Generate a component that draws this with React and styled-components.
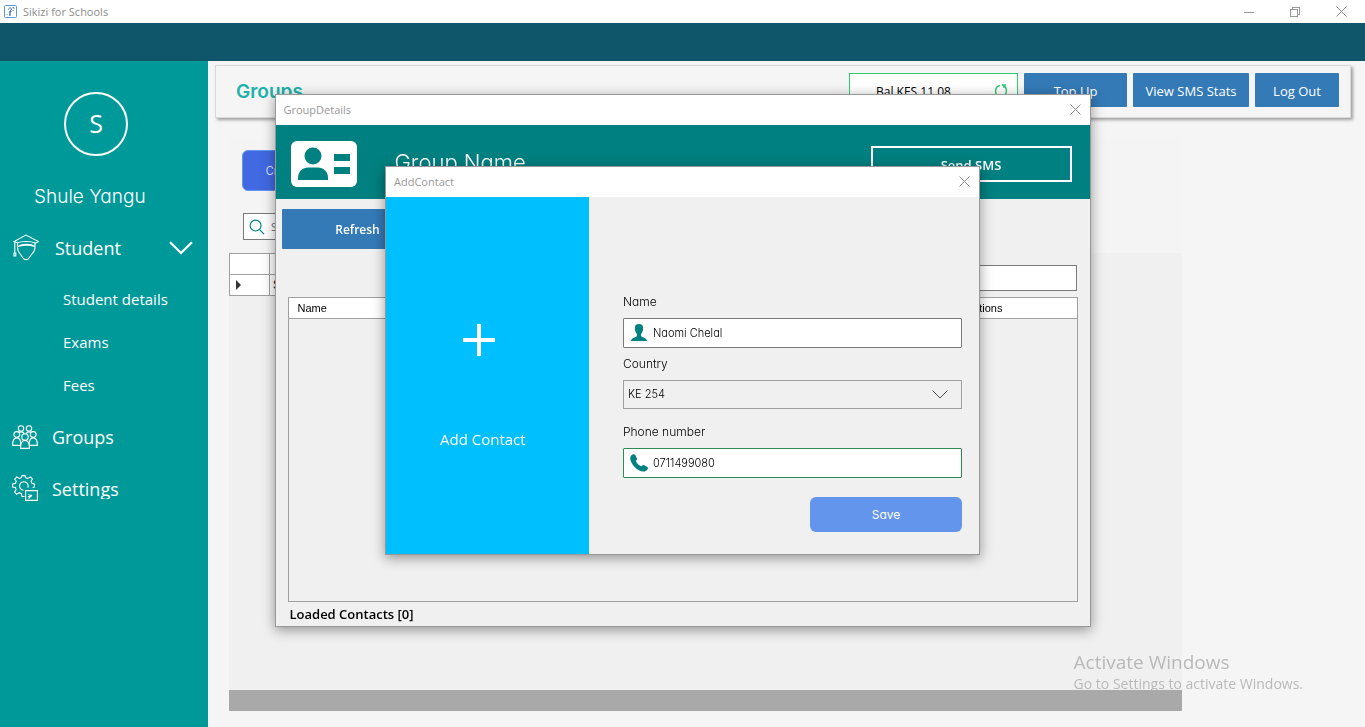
import React from 'react';
import styled, {createGlobalStyle} from 'styled-components';

const FONTS = {
  ui: "'Open Sans', 'Noto Sans', sans-serif",
  round: "Inter, Lato, sans-serif",
  plain: "'Liberation Sans', Arial, sans-serif",
};

const COLORS = {
  sidebar: '#009999',
  strip: '#0f566b',
  page: '#f5f5f5',
  face: '#f0f0f0',
  teal: '#008080',
  blue: '#337ab7',
  cyan: '#00bfff',
  muted: '#999999',
};

const App = () => {
  const [country, setCountry] = React.useState('KE 254');
  const [name, setName] = React.useState('Naomi Chelal');
  const [phone, setPhone] = React.useState('0711499080');

  return (
    <Shell>
      <GlobalStyle/>
      <WindowBar>
        <AppIcon/>
        <WindowTitle>Sikizi for Schools</WindowTitle>
        <CaptionButton aria-label='Minimize'>
          <svg width='10' height='10' shapeRendering='crispEdges'>
            <path d='M0 5.500h10' stroke='#999'/>
          </svg>
        </CaptionButton>
        <CaptionButton aria-label='Restore'>
          <svg width='10' height='10' fill='none' stroke='#999' shapeRendering='crispEdges'>
            <path d='M.5 2.500h7v7h-7zM2.500 2V.5h7v7H8'/>
          </svg>
        </CaptionButton>
        <CaptionButton aria-label='Close'><CloseIcon/></CaptionButton>
      </WindowBar>
      <Strip/>
      <Body>
        <Sidebar>
          <Avatar>S</Avatar>
          <School>Shule Yangu</School>
          <NavLink href='#student' $inset={13} $gap={16}>
            <StudentIcon/>
            <NavText>Student</NavText>
            <NavChevron width='24' height='14' viewBox='0 0 24 14' fill='none' stroke='#fff' strokeWidth='2.300'>
              <path d='M1 1.200 12 12 23 1.200'/>
            </NavChevron>
          </NavLink>
          <SubNav>
            <SubLink href='#details'>Student details</SubLink>
            <SubLink href='#exams'>Exams</SubLink>
            <SubLink href='#fees'>Fees</SubLink>
          </SubNav>
          <NavLink href='#groups' $inset={12} $gap={14}>
            <GroupIcon/>
            <NavText>Groups</NavText>
          </NavLink>
          <NavLink href='#settings' $inset={12} $gap={14}>
            <SettingsIcon/>
            <ClippedNavText>Settings</ClippedNavText>
          </NavLink>
        </Sidebar>
        <Main>
          <PageHeader>
            <PageTitle>Groups</PageTitle>
            <Balance>
              <span>Bal KES 11.08</span>
              <RefreshIcon/>
            </Balance>
            <HeaderButton $width={103}>Top Up</HeaderButton>
            <HeaderButton $width={116}>View SMS Stats</HeaderButton>
            <HeaderButton $width={84}>Log Out</HeaderButton>
          </PageHeader>
          <Tools>
            <CreateButton>Create Group</CreateButton>
            <SearchBox>
              <svg width='16' height='16' viewBox='0 0 17 17' fill='none' stroke={COLORS.teal} strokeWidth='1.200'>
                <circle cx='7' cy='7' r='5.800'/>
                <path d='M11 11l5 5'/>
              </svg>
              <input type='search' aria-label='Search groups' placeholder='Search'/>
            </SearchBox>
          </Tools>
          <GridPanel>
            <GroupTable>
              <thead>
                <tr><th/><th>Group Name</th></tr>
              </thead>
              <tbody>
                <tr>
                  <td>
                    <svg width='6' height='10'><path d='M0 0l5 5-5 5z' fill='#333'/></svg>
                  </td>
                  <td>Staff</td>
                </tr>
              </tbody>
            </GroupTable>
            <GridFooter/>
          </GridPanel>
        </Main>
      </Body>

      <Watermark>
        <h2>Activate Windows</h2>
        <p>Go to Settings to activate Windows.</p>
      </Watermark>

      <Layer>
        <GroupWindow role='dialog' aria-label='GroupDetails'>
          <DialogBar>
            <DialogTitle>GroupDetails</DialogTitle>
            <DialogClose aria-label='Close GroupDetails'><CloseIcon/></DialogClose>
          </DialogBar>
          <Banner>
            <CardIcon/>
            <GroupName>Group Name</GroupName>
            <SendButton>Send SMS</SendButton>
          </Banner>
          <GroupBody>
            <RefreshButton>Refresh</RefreshButton>
            <Filter type='text' aria-label='Filter contacts'/>
            <ContactList>
              <ContactTable>
                <thead>
                  <tr><th>Name</th><th>Options</th></tr>
                </thead>
              </ContactTable>
            </ContactList>
            <Loaded>Loaded Contacts [0]</Loaded>
          </GroupBody>
        </GroupWindow>
      </Layer>

      <Layer>
        <ContactWindow role='dialog' aria-label='AddContact'>
          <DialogBar>
            <DialogTitle>AddContact</DialogTitle>
            <DialogClose aria-label='Close AddContact'><CloseIcon/></DialogClose>
          </DialogBar>
          <ContactBody>
            <AddPane>
              <PlusIcon width='32' height='32' stroke='#fff' strokeWidth='4'>
                <path d='M0 16h32M16 0v32'/>
              </PlusIcon>
              <AddText>Add Contact</AddText>
            </AddPane>
            <Form onSubmit={(ev) => ev.preventDefault()}>
              <Label htmlFor='name'>Name</Label>
              <TextBox $border='#7a7a7a'>
                <PersonIcon/>
                <input id='name' value={name} onChange={(ev) => setName(ev.target.value)}/>
              </TextBox>
              <Label htmlFor='country'>Country</Label>
              <SelectBox>
                <select id='country' value={country} onChange={(ev) => setCountry(ev.target.value)}>
                  <option>KE 254</option>
                  <option>UG 256</option>
                  <option>TZ 255</option>
                </select>
                <svg width='16' height='9' viewBox='0 0 16 9' fill='none' stroke='#555'>
                  <path d='M.5.5 8 8 15.500.5'/>
                </svg>
              </SelectBox>
              <Label htmlFor='phone'>Phone number</Label>
              <TextBox $border='#2e8b57'>
                <PhoneIcon/>
                <input id='phone' type='tel' value={phone} onChange={(ev) => setPhone(ev.target.value)}/>
              </TextBox>
              <SaveButton type='submit'>Save</SaveButton>
            </Form>
          </ContactBody>
        </ContactWindow>
      </Layer>
    </Shell>
  );
};

const AppIcon = () => (
  <svg width='13' height='13' viewBox='0 0 13 13' fill='none' stroke='#5b9bd5'>
    <rect x='.5' y='.5' width='12' height='12' rx='1'/>
    <path d='M7.500 6c-1.500.5-2 1.500-1.500 5' stroke='#2e75b6' strokeWidth='1.300'/>
    <path d='M4.500 4.500c0-2 3-2 3-.5S5 6 5.500 7.500' stroke='#2e75b6'/>
    <path d='M8.500 2.500h1.500v1.500M2.500 9.500h1M8.500 6l1-1'/>
  </svg>
);

const CloseIcon = () => (
  <svg width='11' height='11' viewBox='0 0 11 11' stroke='#8c8c8c'>
    <path d='M.5.5l10 10M10.500.5l-10 10'/>
  </svg>
);

const StudentIcon = () => (
  <svg width='26' height='27' viewBox='0 0 26 27' fill='none' stroke='#fff' strokeWidth='1.100'>
    <path d='M4.500 8.800 1 7.500 13 1l12.500 6.500-3.500 2'/>
    <path d='M4.500 12.500V9C8 7 18 7 22 9v3.500'/>
    <path d='M5 12.500c4-3 13-3 17 0-5-1.500-12-1.500-17 0z'/>
    <path d='M4.500 12.500c-.3 3.500.7 5.500 3 8l2.500 3.500c1.500 2.300 4.500 2.300 6 0l2.500-3.500c2.300-2.500 3.800-5 3.500-8'/>
    <path d='M1.800 8V19M1 19h1.800v3H1z'/>
  </svg>
);

const GroupIcon = () => (
  <svg width='26' height='24' viewBox='0 0 26 24' fill={COLORS.sidebar} stroke='#fff' strokeWidth='1.100'>
    <circle cx='9' cy='3.500' r='2.700'/>
    <circle cx='17' cy='3.500' r='2.700'/>
    <path d='M4.500 13c0-8 9-8 8.500-1 0-7 9-7 8.500 1'/>
    <circle cx='4.800' cy='9.500' r='2.900'/>
    <circle cx='21.200' cy='9.500' r='2.900'/>
    <path d='M.6 20.400c0-5 1-7.500 4.200-7.500 3 0 4.200 2.500 4.200 7.500zM17 20.400c0-5 1-7.500 4.200-7.500 3 0 4.200 2.500 4.200 7.500z'/>
    <circle cx='13' cy='12' r='3.200'/>
    <path d='M8.500 23.400c0-5.500 1.200-8 4.500-8s4.500 2.500 4.500 8z'/>
  </svg>
);

const SettingsIcon = () => (
  <svg width='26' height='26' viewBox='0 0 26 26' fill='none' stroke='#fff' strokeWidth='1.100'>
    <path d='M12.500 21.500H10l-.6-2.800-2.200-1-2.600 1.500-2-2.200 1.500-2.400-.8-2.100L.6 12V9l2.700-.6 1-2.100L2.700 4l2.100-2.100 2.500 1.500 2.100-.9L10 .6h3l.6 1.900 2.200.9 2.500-1.500L20.500 4 19 6.300l.9 2.100 2.500.6v3l-1.800.5'/>
    <path d='M11.500 15.300a4.300 4.300 0 1 1 4.300-2.500'/>
    <path d='M13.600 15.600h11.800v9.800H13.600z'/>
    <path d='M16.500 19.500h1M19 20l-2 1.500h2.500M16.500 23.500 20 20'/>
  </svg>
);

const RefreshIcon = () => (
  <svg width='14' height='14' viewBox='0 0 14 14' fill='none' stroke='#2ecc71' strokeWidth='1.500'>
    <path d='M5.500 13C0 11 .5 2.500 6 1.500M8.500 1C14 3 13.500 11 8 12.500'/>
    <path d='M8 1h4M10 1v3M6 13H2.500M4 13v-3'/>
  </svg>
);

const CardIcon = () => (
  <svg width='66' height='46' viewBox='0 0 66 46'>
    <rect width='66' height='46' rx='6' fill='#fff'/>
    <g fill={COLORS.teal}>
      <circle cx='22' cy='15' r='8.500'/>
      <path d='M7 39v-2c0-7 5-10.500 10-10.500h10c5 0 10 3.500 10 10.500v2z'/>
      <path d='M43 13h16v7H43zM43 26h16v7H43z'/>
    </g>
  </svg>
);

const PersonIcon = () => (
  <svg width='18' height='17' viewBox='-1 0 18 17' fill={COLORS.teal}>
    <path d='M8 0c2.500 0 4 1 4 3.500 0 1.200.2 1.500 0 2.500-.3 1.500-1 3-2 4v2c1 1.500 5.500 1.500 6 5H0c.5-3.500 5-3.500 6-5v-2C5 9 4.300 7.500 4 6c-.2-1 0-1.300 0-2.500C4 1 5.500 0 8 0z'/>
  </svg>
);

const PhoneIcon = () => (
  <svg width='18' height='18' viewBox='0 0 18 18' fill={COLORS.teal}>
    <path d='M2.500.5C3.500-.2 5 .3 5.500 1.500L7 4.500c.4 1-.8 1.600-1.200 2.200C6.500 9 9 11.600 11.300 12.200c.8-.5 1.500-1.500 2.500-1.200l3.200 1.700c1.200.8 1.200 2 .4 2.800-1.500 2-3.500 2.500-6 1.700C6 15.500 2 11 .4 6 0 3.500.5 1.800 2.500.5z'/>
  </svg>
);

const GlobalStyle = createGlobalStyle`
    *, *::before, *::after {
        box-sizing: border-box;
    }

    body {
        margin: 0;
        font-family: ${FONTS.ui};
    }

    h1, h2, p {
        margin: 0;
        font-weight: 400;
    }

    button, input, select {
        font: inherit;
        color: inherit;
    }

    button {
        padding: 0;
        border: none;
    }

    svg {
        display: block;
        flex-shrink: 0;
    }
`;

const Shell = styled.div`
    display: flex;
    flex-direction: column;
    min-height: 100vh;
    background: ${COLORS.page};
`;

const WindowBar = styled.header`
    display: flex;
    align-items: center;
    height: 23px;
    padding: 0 1px 0 4px;
    background: #fff;
`;

const WindowTitle = styled.h1`
    flex: 1;
    margin-left: 6px;
    font-size: 11px;
    color: #8c8c8c;
`;

const CaptionButton = styled.button`
    display: grid;
    place-items: center;
    width: 46px;
    height: 20px;
    background: none;
`;

const Strip = styled.div`
    height: 38px;
    background: ${COLORS.strip};
`;

const Body = styled.div`
    display: flex;
    flex: 1;
`;

const Sidebar = styled.nav`
    width: 208px;
    padding-top: 31px;
    background: ${COLORS.sidebar};
    color: #fff;
`;

const Avatar = styled.div`
    display: grid;
    place-items: center;
    width: 64px;
    height: 64px;
    margin-left: 64px;
    padding-bottom: 2px;
    border: 2px solid #fff;
    border-radius: 50%;
    font-size: 25px;
`;

const School = styled.p`
    margin: 28px 0 12px 34px;
    font-family: ${FONTS.round};
    font-feature-settings: 'cv11';
    font-size: 19px;
    font-weight: 300;
    line-height: 26px;
`;

const NavLink = styled.a`
    display: flex;
    align-items: center;
    gap: ${({$gap}) => $gap}px;
    height: 51px;
    padding-left: ${({$inset}) => $inset}px;
    color: inherit;
    text-decoration: none;
`;

const NavText = styled.span`
    font-size: 18px;
    line-height: 24px;
`;

// the descender runs under the edge of this label
const ClippedNavText = styled(NavText)`
    height: 22px;
    overflow: hidden;
`;

const NavChevron = styled.svg`
    margin-left: auto;
    margin-right: 15px;
`;

const SubNav = styled.div`
    display: flex;
    flex-direction: column;
    padding: 5px 0 4px 63px;
`;

const SubLink = styled.a`
    font-size: 15px;
    line-height: 43px;
    color: inherit;
    text-decoration: none;
`;

const Main = styled.main`
    display: flex;
    flex: 1;
    flex-direction: column;
    min-width: 0;
    padding: 4px 14px 16px 7px;
`;

const PageHeader = styled.div`
    display: flex;
    gap: 6px;
    height: 53px;
    padding: 7px 11px 0 20px;
    border: 1px solid #d9d9d9;
    box-shadow: 2px 2px 3px rgba(0, 0, 0, 0.35);
`;

const PageTitle = styled.h1`
    flex: 1;
    font-family: ${FONTS.round};
    font-feature-settings: 'cv11';
    font-size: 19px;
    font-weight: 600;
    line-height: 38px;
    color: #20b2aa;
`;

const Balance = styled.div`
    display: flex;
    align-items: center;
    justify-content: space-between;
    width: 169px;
    height: 36px;
    padding: 0 9px 0 26px;
    border: 1px solid #2ecc71;
    background: #fff;
    font-size: 12px;
`;

const HeaderButton = styled.button`
    width: ${({$width}) => $width}px;
    height: 34px;
    padding-top: 2px;
    border-radius: 1px;
    background: ${COLORS.blue};
    color: #fff;
    font-size: 13px;
`;

const Tools = styled.div`
    display: flex;
    flex-direction: column;
    align-items: flex-start;
    gap: 22px;
    margin: 20px 169px 0 14px;
    padding: 12px 0 13px 13px;
    background: #f4f4f4;
`;

const CreateButton = styled.button`
    width: 116px;
    height: 41px;
    border: 1px solid #6495ed;
    border-radius: 6px;
    background: #4169e1;
    color: #fff;
    font-family: ${FONTS.round};
    font-size: 11px;
    font-weight: 300;
`;

const SearchBox = styled.div`
    display: flex;
    align-items: center;
    gap: 4px;
    width: 240px;
    height: 27px;
    margin-left: 1px;
    padding: 0 5px;
    border: 1px solid #7a7a7a;
    background: #fff;

    input {
        flex: 1;
        min-width: 0;
        border: none;
        outline: none;
        font-size: 11px;
    }
`;

const GridPanel = styled.section`
    display: flex;
    flex: 1;
    flex-direction: column;
    justify-content: space-between;
    align-items: flex-start;
    margin: 0 169px 0 14px;
    background: ${COLORS.face};
`;

const GroupTable = styled.table`
    border-collapse: collapse;
    background: #fff;
    font-family: ${FONTS.plain};
    font-size: 12px;
    text-align: left;

    th, td {
        width: 160px;
        height: 21px;
        padding: 0 3px;
        border: 1px solid #a0a0a0;
        font-weight: 400;
    }

    th {
        padding: 0 8px;
    }

    th:first-child, td:first-child {
        width: 40px;
        padding-left: 6px;
    }
`;

const GridFooter = styled.div`
    position: relative;
    z-index: 1;
    width: 100%;
    height: 21px;
    background: #a9a9a9;
`;

const Watermark = styled.aside`
    position: fixed;
    right: 62px;
    bottom: 33px;
    color: #b9b9b9;

    h2 {
        font-size: 19px;
        line-height: 24px;
    }

    p {
        font-size: 14px;
        line-height: 20px;
    }
`;

const Layer = styled.div`
    position: fixed;
    inset: 0;
    z-index: 2;
    display: grid;
    place-items: center;
    padding-bottom: 7px;
    pointer-events: none;
`;

const Dialog = styled.section`
    display: flex;
    flex-direction: column;
    border: 1px solid #999;
    background: ${COLORS.face};
    box-shadow: 0 3px 12px rgba(0, 0, 0, 0.4);
    pointer-events: auto;
`;

const GroupWindow = styled(Dialog)`
    width: 816px;
    min-height: 533px;
`;

const ContactWindow = styled(Dialog)`
    width: 595px;
`;

const DialogBar = styled.header`
    display: flex;
    align-items: center;
    justify-content: space-between;
    height: 30px;
    padding: 0 9px 1px 8px;
    background: #fff;
`;

const DialogTitle = styled.h2`
    font-size: 11px;
    color: ${COLORS.muted};
`;

const DialogClose = styled.button`
    background: none;
`;

const Banner = styled.div`
    display: flex;
    align-items: center;
    height: 74px;
    padding: 4px 18px 0 15px;
    background: ${COLORS.teal};
    color: #fff;
`;

const GroupName = styled.h2`
    flex: 1;
    margin-left: 38px;
    padding-bottom: 4px;
    font-family: ${FONTS.round};
    font-feature-settings: 'cv11';
    font-size: 22px;
    font-weight: 300;
`;

const SendButton = styled.button`
    width: 201px;
    height: 36px;
    padding-top: 2px;
    border: 2px solid #fff;
    background: none;
    font-size: 13px;
    font-weight: 600;
`;

const GroupBody = styled.div`
    display: flex;
    flex: 1;
    flex-direction: column;
    padding: 10px 12px 0;
`;

const RefreshButton = styled.button`
    width: 152px;
    height: 40px;
    margin-left: -6px;
    padding-top: 2px;
    border-radius: 1px;
    background: ${COLORS.blue};
    color: #fff;
    font-size: 12px;
    font-weight: 600;
`;

const Filter = styled.input`
    align-self: flex-end;
    width: 240px;
    height: 26px;
    margin: 16px 1px 6px 0;
    border: 1px solid #7a7a7a;
    background: #fff;
`;

const ContactList = styled.div`
    flex: 1;
    border: 1px solid #a0a0a0;
`;

const ContactTable = styled.table`
    width: 100%;
    border-collapse: collapse;
    background: #fff;
    font-family: ${FONTS.plain};
    font-size: 11px;
    text-align: left;

    th {
        height: 21px;
        padding: 0 9px;
        border-bottom: 1px solid #a0a0a0;
        font-weight: 400;
    }

    th:last-child {
        width: 121px;
    }
`;

const Loaded = styled.p`
    padding-left: 2px;
    font-size: 13px;
    font-weight: 600;
    line-height: 24px;
`;

const ContactBody = styled.div`
    display: flex;
`;

const AddPane = styled.div`
    width: 203px;
    padding: 127px 0 0 54px;
    background: ${COLORS.cyan};
    color: #fff;
`;

const PlusIcon = styled.svg`
    margin-left: 23px;
`;

const AddText = styled.p`
    margin-top: 73px;
    font-size: 15px;
    line-height: 20px;
`;

const Form = styled.form`
    display: flex;
    flex: 1;
    flex-direction: column;
    padding: 89px 17px 22px 34px;
    font-family: ${FONTS.round};
    font-feature-settings: 'cv11';
    font-weight: 300;
`;

const Label = styled.label`
    margin: 7px 0;
    font-size: 12px;
    line-height: 18px;
`;

const TextBox = styled.div`
    display: flex;
    align-items: center;
    gap: 5px;
    height: 30px;
    padding: 0 6px;
    border: 1px solid ${({$border}) => $border};
    border-radius: 1px;
    background: #fff;

    input {
        flex: 1;
        min-width: 0;
        padding: 0;
        border: none;
        outline: none;
        background: none;
        font-size: 11px;
        font-feature-settings: inherit;
    }
`;

const SelectBox = styled.div`
    display: grid;
    align-items: center;
    height: 29px;
    margin-bottom: 7px;
    border: 1px solid #a0a0a0;

    select, svg {
        grid-area: 1 / 1;
    }

    select {
        height: 100%;
        padding: 0 4px;
        border: none;
        outline: none;
        appearance: none;
        background: none;
        font-size: 11px;
    }

    svg {
        justify-self: end;
        margin-right: 13px;
        pointer-events: none;
    }
`;

const SaveButton = styled.button`
    align-self: flex-end;
    width: 152px;
    height: 35px;
    margin-top: 19px;
    border-radius: 6px;
    background: #6495ed;
    color: #fff;
    font-size: 12px;
    font-weight: 400;
`;

export default App;
